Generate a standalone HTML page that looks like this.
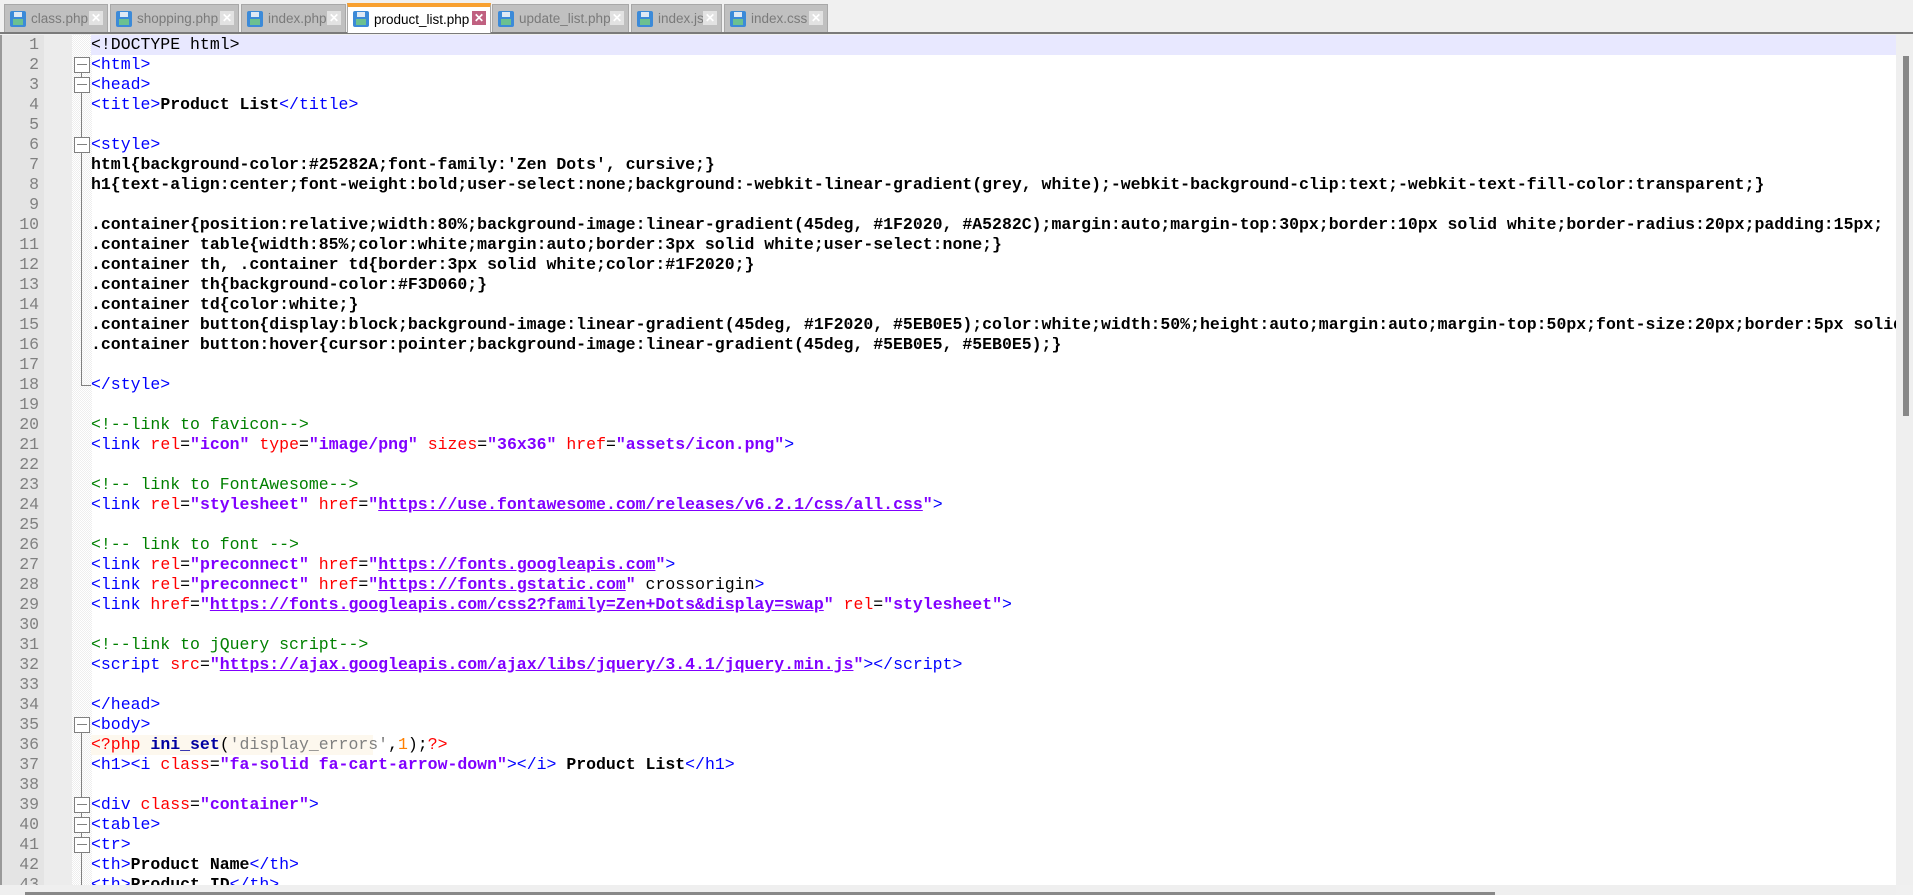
<!DOCTYPE html>
<html><head><style>
*{margin:0;padding:0;box-sizing:border-box}
body{width:1913px;height:895px;overflow:hidden;background:#f0f0f0;font-family:"Liberation Sans",sans-serif;position:relative}
.tabs{position:absolute;left:0;top:0;width:1913px;height:34px;background:#f0f0f0;border-bottom:2px solid #7a7a7a}
.tab{position:absolute;top:4px;height:28px;background:#c0c0c0;border:1px solid #a8a8a8;border-bottom:none;font-size:13.5px;color:#7a7a7a;line-height:27px;padding-left:26px;white-space:nowrap;overflow:hidden}
.tab.act{background:#fff;color:#000;top:3px;height:30px;border-top:4px solid #f8a030;line-height:25px}
.ic{position:absolute;left:5px;top:6px;width:16px;height:16px;background:#3c8ad8;border-radius:2px}
.act .ic{top:4px}
.ic:after{content:"";position:absolute;left:3px;bottom:2px;width:10px;height:6px;background:#6cc090}
.ic:before{content:"";position:absolute;left:4px;top:1px;width:8px;height:5px;background:#dfe9f5}
.x{position:absolute;right:4px;top:6px;width:14px;height:14px;background:#e2e2e2;color:#fff;font-size:12px;line-height:14px;text-align:center;font-weight:bold}
.act .x{background:#c06080;top:4px}
.ed{position:absolute;left:0;top:35px;width:1896px;height:850px;background:#fff;overflow:hidden;border-left:2px solid #999}
.gut{position:absolute;left:0;top:0;width:42px;height:850px;background:#e4e4e4}
.gut2{position:absolute;left:42px;top:0;width:30px;height:850px;background:#ececec}
.fold{position:absolute;left:70px;top:0;width:20px;height:850px;background:repeating-conic-gradient(#eee 0 25%,#fff 0 50%) 0 0/2px 2px}
.ln{position:absolute;left:0;top:0;width:37px;text-align:right;font:16.5px/20px "Liberation Mono",monospace;color:#808080}
.ln div,.code div{height:20px;white-space:pre}
.code{position:absolute;left:89px;top:0;font:16.5px/20px "Liberation Mono",monospace;color:#000}
.t{color:#0000ff}.a{color:#ff0000}.v{color:#8000ff;font-weight:bold}.c{color:#008000}.b{font-weight:bold}.u{text-decoration:underline}
.box{position:absolute;left:72px;width:16px;height:16px;border:1px solid #808080;background:#fff}
.box:after{content:"";position:absolute;left:2px;top:6px;width:10px;height:1px;background:#808080}
.vl{position:absolute;left:79px;width:1px;background:#808080}
.vs{position:absolute;left:1896px;top:35px;width:17px;height:850px;background:#efefef}
.vt{position:absolute;left:1903px;top:56px;width:6px;height:360px;background:#888}
.hs{position:absolute;left:0;top:885px;width:1896px;height:10px;background:#efefef}
.ht{position:absolute;left:25px;top:892px;width:1470px;height:3px;background:#888}
</style></head><body>
<div class="tabs">
<div class="tab" style="left:4px;width:104px"><span class="ic"></span>class.php<span class="x">✕</span></div>
<div class="tab" style="left:110px;width:129px"><span class="ic"></span>shopping.php<span class="x">✕</span></div>
<div class="tab" style="left:241px;width:105px"><span class="ic"></span>index.php<span class="x">✕</span></div>
<div class="tab act" style="left:347px;width:144px"><span class="ic"></span>product_list.php<span class="x">✕</span></div>
<div class="tab" style="left:492px;width:137px"><span class="ic"></span>update_list.php<span class="x">✕</span></div>
<div class="tab" style="left:631px;width:91px"><span class="ic"></span>index.js<span class="x">✕</span></div>
<div class="tab" style="left:724px;width:104px"><span class="ic"></span>index.css<span class="x">✕</span></div>
</div>
<div class="ed">
<div class="gut"></div><div class="gut2"></div><div class="fold"></div>
<div style="position:absolute;left:89px;top:0;width:1810px;height:20px;background:#e8e8ff"></div>
<div style="position:absolute;left:89px;top:700px;width:282px;height:20px;background:#fdf8ee"></div>
<div class="vl" style="top:37px;height:314px"></div>
<div style="position:absolute;left:79px;top:350px;width:10px;height:1px;background:#808080"></div>
<div class="vl" style="top:697px;height:160px"></div>
<div class="box" style="top:22px"></div><div class="box" style="top:42px"></div><div class="box" style="top:102px"></div>
<div class="box" style="top:682px"></div><div class="box" style="top:762px"></div><div class="box" style="top:782px"></div><div class="box" style="top:802px"></div>
<div class="ln"><div>1</div><div>2</div><div>3</div><div>4</div><div>5</div><div>6</div><div>7</div><div>8</div><div>9</div><div>10</div><div>11</div><div>12</div><div>13</div><div>14</div><div>15</div><div>16</div><div>17</div><div>18</div><div>19</div><div>20</div><div>21</div><div>22</div><div>23</div><div>24</div><div>25</div><div>26</div><div>27</div><div>28</div><div>29</div><div>30</div><div>31</div><div>32</div><div>33</div><div>34</div><div>35</div><div>36</div><div>37</div><div>38</div><div>39</div><div>40</div><div>41</div><div>42</div><div>43</div></div>
<div class="code"><div>&lt;!DOCTYPE html&gt;</div><div><span class="t">&lt;html&gt;</span></div><div><span class="t">&lt;head&gt;</span></div><div><span class="t">&lt;title&gt;</span><b>Product List</b><span class="t">&lt;/title&gt;</span></div><div></div><div><span class="t">&lt;style&gt;</span></div><div class="b">html{background-color:#25282A;font-family:'Zen Dots', cursive;}</div><div class="b">h1{text-align:center;font-weight:bold;user-select:none;background:-webkit-linear-gradient(grey, white);-webkit-background-clip:text;-webkit-text-fill-color:transparent;}</div><div></div><div class="b">.container{position:relative;width:80%;background-image:linear-gradient(45deg, #1F2020, #A5282C);margin:auto;margin-top:30px;border:10px solid white;border-radius:20px;padding:15px;</div><div class="b">.container table{width:85%;color:white;margin:auto;border:3px solid white;user-select:none;}</div><div class="b">.container th, .container td{border:3px solid white;color:#1F2020;}</div><div class="b">.container th{background-color:#F3D060;}</div><div class="b">.container td{color:white;}</div><div class="b">.container button{display:block;background-image:linear-gradient(45deg, #1F2020, #5EB0E5);color:white;width:50%;height:auto;margin:auto;margin-top:50px;font-size:20px;border:5px solid</div><div class="b">.container button:hover{cursor:pointer;background-image:linear-gradient(45deg, #5EB0E5, #5EB0E5);}</div><div></div><div><span class="t">&lt;/style&gt;</span></div><div></div><div class="c">&lt;!--link to favicon--&gt;</div><div><span class="t">&lt;link </span><span class="a">rel</span>=<span class="v">"icon"</span> <span class="a">type</span>=<span class="v">"image/png"</span> <span class="a">sizes</span>=<span class="v">"36x36"</span> <span class="a">href</span>=<span class="v">"assets/icon.png"</span><span class="t">&gt;</span></div><div></div><div class="c">&lt;!-- link to FontAwesome--&gt;</div><div><span class="t">&lt;link </span><span class="a">rel</span>=<span class="v">"stylesheet"</span> <span class="a">href</span>=<span class="v">"<span class="u">https://use.fontawesome.com/releases/v6.2.1/css/all.css</span>"</span><span class="t">&gt;</span></div><div></div><div class="c">&lt;!-- link to font --&gt;</div><div><span class="t">&lt;link </span><span class="a">rel</span>=<span class="v">"preconnect"</span> <span class="a">href</span>=<span class="v">"<span class="u">https://fonts.googleapis.com</span>"</span><span class="t">&gt;</span></div><div><span class="t">&lt;link </span><span class="a">rel</span>=<span class="v">"preconnect"</span> <span class="a">href</span>=<span class="v">"<span class="u">https://fonts.gstatic.com</span>"</span> crossorigin<span class="t">&gt;</span></div><div><span class="t">&lt;link </span><span class="a">href</span>=<span class="v">"<span class="u">https://fonts.googleapis.com/css2?family=Zen+Dots&amp;display=swap</span>"</span> <span class="a">rel</span>=<span class="v">"stylesheet"</span><span class="t">&gt;</span></div><div></div><div class="c">&lt;!--link to jQuery script--&gt;</div><div><span class="t">&lt;script </span><span class="a">src</span>=<span class="v">"<span class="u">https://ajax.googleapis.com/ajax/libs/jquery/3.4.1/jquery.min.js</span>"</span><span class="t">&gt;&lt;/script&gt;</span></div><div></div><div><span class="t">&lt;/head&gt;</span></div><div><span class="t">&lt;body&gt;</span></div><div><span class="a">&lt;?php</span> <b style="color:#0000a0">ini_set</b>(<span style="color:#808080">'display_errors'</span>,<span style="color:#ff8000">1</span>);<span class="a">?&gt;</span></div><div><span class="t">&lt;h1&gt;&lt;i </span><span class="a">class</span>=<span class="v">"fa-solid fa-cart-arrow-down"</span><span class="t">&gt;&lt;/i&gt;</span> <b>Product List</b><span class="t">&lt;/h1&gt;</span></div><div></div><div><span class="t">&lt;div </span><span class="a">class</span>=<span class="v">"container"</span><span class="t">&gt;</span></div><div><span class="t">&lt;table&gt;</span></div><div><span class="t">&lt;tr&gt;</span></div><div><span class="t">&lt;th&gt;</span><b>Product Name</b><span class="t">&lt;/th&gt;</span></div><div><span class="t">&lt;th&gt;</span><b>Product ID</b><span class="t">&lt;/th&gt;</span></div></div>
</div>
<div class="vs"></div><div class="vt"></div>
<div class="hs"></div><div class="ht"></div>
</body></html>
